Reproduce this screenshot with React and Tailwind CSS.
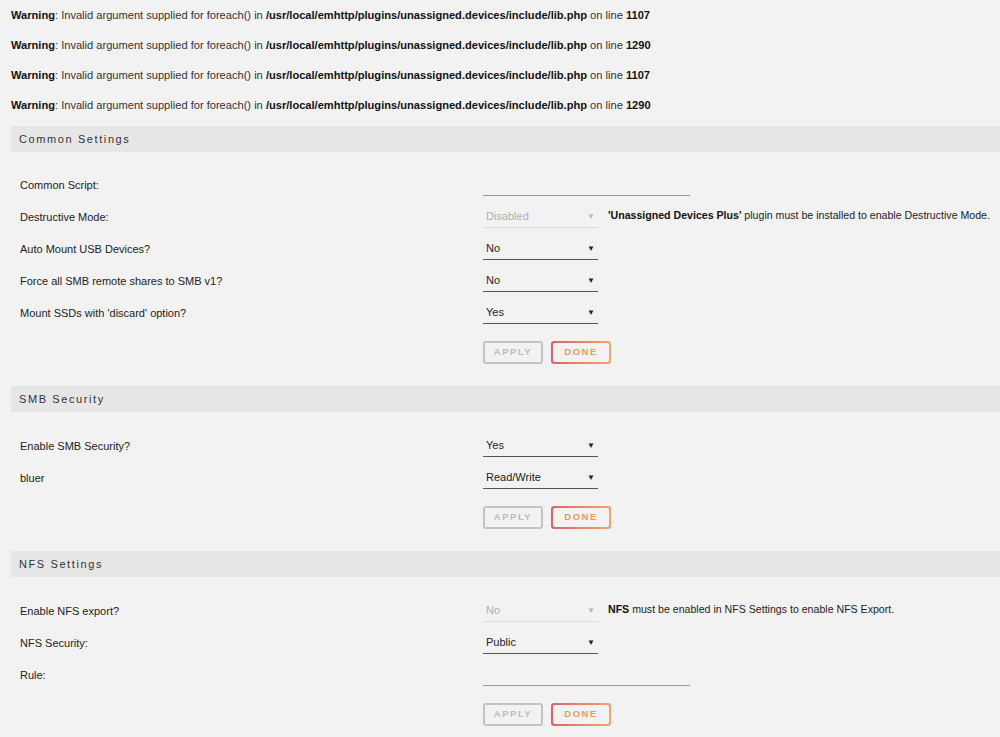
import React from 'react';

const warnings = ['1107', '1290', '1107', '1290'];

const SelectBox = ({ value, disabled }) => (
  <div
    className={`w-[115px] h-[24px] flex items-center justify-between pl-[3px] pr-[3px] pt-[2px] border-b ${
      disabled ? 'border-[#dcdcdc] text-[#b0b0b0]' : 'border-[#555] text-[#222]'
    }`}
  >
    <span>{value}</span>
    <span className={`text-[8px] ${disabled ? 'text-[#b8b8b8]' : 'text-[#222]'}`}>▼</span>
  </div>
);

const TextLine = () => <div className="w-[207px] h-[24px] border-b border-[#9a9a9a]" />;

const Row = ({ label, children }) => (
  <div className="h-[32px] grid grid-cols-[463px_1fr] items-center pl-[20px]">
    <span className="text-[#222] pt-[2px]">{label}</span>
    <div className="flex items-center gap-[10px]">{children}</div>
  </div>
);

const Buttons = () => (
  <div className="flex gap-[8px] pl-[483px] mt-[13px]">
    <div className="w-[60px] h-[23px] rounded-[3px] border-2 border-[#c4c4c4] flex items-center justify-center text-[9.5px] font-bold tracking-[1.5px] text-[#bcbcbc]">
      APPLY
    </div>
    <div className="w-[60px] h-[23px] rounded-[3px] p-[2px] bg-gradient-to-r from-[#d9626a] to-[#f2a56b]">
      <div className="w-full h-full rounded-[2px] bg-[#f2f2f2] flex items-center justify-center text-[9.5px] font-bold tracking-[1.5px] text-[#ec9a5c]">
        DONE
      </div>
    </div>
  </div>
);

const Section = ({ title, children, first }) => (
  <div>
    <div className={`ml-[11px] h-[26px] bg-[#e6e6e6] flex items-center pl-[8px] text-[11px] tracking-[1.6px] text-[#333] ${first ? 'mt-[6px]' : 'mt-[22px]'}`}>
      {title}
    </div>
    <div className={first ? 'mt-[16px]' : 'mt-[17px]'}>{children}</div>
    <Buttons />
  </div>
);

export default function App() {
  return (
    <div className="w-[1000px] h-[737px] overflow-hidden bg-[#f2f2f2] text-[11px] text-[#333] font-['Liberation_Sans',sans-serif]">
      {warnings.map((line, i) => (
        <div key={i} className="h-[30px] flex items-center pl-[11px] text-[#333] text-[11.1px]">
          <span>
            <b className="text-[#111]">Warning</b>: Invalid argument supplied for foreach() in{' '}
            <b className="text-[#111]">/usr/local/emhttp/plugins/unassigned.devices/include/lib.php</b> on line{' '}
            <b className="text-[#111]">{line}</b>
          </span>
        </div>
      ))}

      <Section title="Common Settings" first>
        <Row label="Common Script:">
          <TextLine />
        </Row>
        <Row label="Destructive Mode:">
          <SelectBox value="Disabled" disabled />
          <span className="text-[#222] whitespace-nowrap text-[10.6px]">
            <b className="text-[#111]">'Unassigned Devices Plus'</b> plugin must be installed to enable Destructive Mode.
          </span>
        </Row>
        <Row label="Auto Mount USB Devices?">
          <SelectBox value="No" />
        </Row>
        <Row label="Force all SMB remote shares to SMB v1?">
          <SelectBox value="No" />
        </Row>
        <Row label="Mount SSDs with 'discard' option?">
          <SelectBox value="Yes" />
        </Row>
      </Section>

      <Section title="SMB Security">
        <Row label="Enable SMB Security?">
          <SelectBox value="Yes" />
        </Row>
        <Row label="bluer">
          <SelectBox value="Read/Write" />
        </Row>
      </Section>

      <Section title="NFS Settings">
        <Row label="Enable NFS export?">
          <SelectBox value="No" disabled />
          <span className="text-[#222] whitespace-nowrap text-[10.6px]">
            <b className="text-[#111]">NFS</b> must be enabled in NFS Settings to enable NFS Export.
          </span>
        </Row>
        <Row label="NFS Security:">
          <SelectBox value="Public" />
        </Row>
        <Row label="Rule:">
          <TextLine />
        </Row>
      </Section>
    </div>
  );
}
